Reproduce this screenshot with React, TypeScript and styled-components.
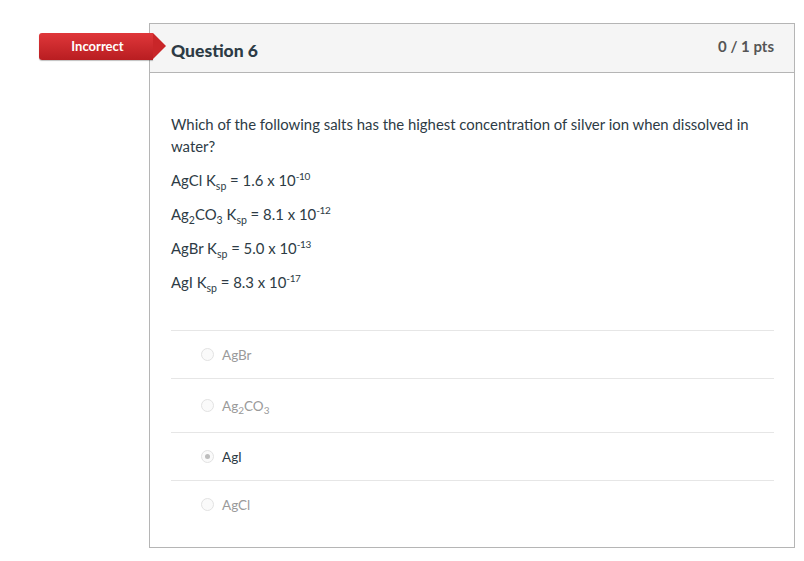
import React from "react";
import styled, { createGlobalStyle } from "styled-components";

const Global = createGlobalStyle`
  html, body { margin: 0; padding: 0; background: #fff; }
  body { font-family: Lato, "Open Sans", Arial, sans-serif; color: #2d3b45; }
`;

const Page = styled.div`
  padding: 23px 0 0 149px;
`;

const Card = styled.div`
  position: relative;
  width: 644px;
  height: 523px;
  border: 1px solid #b5b5b5;
`;

const Badge = styled.div`
  position: absolute;
  left: -111px;
  top: 9px;
  width: 114px;
  height: 27px;
  box-sizing: border-box;
  padding-left: 3px;
  border-radius: 3px 0 0 3px;
  background: linear-gradient(#e0373a, #b81d21);
  color: #fff;
  font-weight: 700;
  font-size: 13px;
  line-height: 27px;
  text-align: center;
  box-shadow: 0 1px 1px rgba(0,0,0,0.25);
  &::after {
    content: "";
    position: absolute;
    right: -13px;
    top: 0;
    border-top: 13.5px solid transparent;
    border-bottom: 13.5px solid transparent;
    border-left: 13px solid #c92629;
  }
`;

const Header = styled.div`
  display: flex;
  align-items: center;
  justify-content: space-between;
  height: 48px;
  padding: 0 20px 0 21px;
  background: #f5f5f5;
  border-bottom: 1px solid #b5b5b5;
`;

const Title = styled.h2`
  margin: 0;
  font-size: 17.5px;
  font-weight: 900;
  color: #2d3b45;
  padding-top: 5px;
`;

const Points = styled.div`
  font-size: 15px;
  font-weight: 700;
  color: #555;
  padding-bottom: 5px;
`;

const Body = styled.div`
  padding: 40px 20px 0 21px;
`;

const Text = styled.div`
  font-size: 14.9px;
  line-height: 22px;
  color: #2d3b45;
  margin-bottom: 12px;
  sub { font-size: 10.5px; line-height: 0; }
  sup { font-size: 10px; line-height: 0; letter-spacing: -0.4px; }
`;

const Answers = styled.div`
  margin-top: 37px;
  border-top: 1px solid #e6e6e6;
`;

const Answer = styled.div<{ $tall?: boolean; $selected?: boolean; $last?: boolean }>`
  display: flex;
  align-items: center;
  gap: 8px;
  height: ${(p) => (p.$tall ? 53 : 47)}px;
  padding-left: 30px;
  border-bottom: 1px solid ${(p) => (p.$last ? "transparent" : "#e6e6e6")};
  font-size: 13.5px;
  color: ${(p) => (p.$selected ? "#2d3b45" : "#9a9a9a")};
`;

const Label = styled.span`
  sub { font-size: 10px; line-height: 0; vertical-align: -3px; }
`;

const Radio = styled.span<{ $checked?: boolean }>`
  position: relative;
  width: 11px;
  height: 11px;
  border-radius: 50%;
  border: 1px solid #e2e2e2;
  background: #fafafa;
  flex: none;
  &::after {
    content: "";
    display: ${(p) => (p.$checked ? "block" : "none")};
    position: absolute;
    left: 3px;
    top: 3px;
    width: 5px;
    height: 5px;
    border-radius: 50%;
    background: #bdbdbd;
  }
`;

export default function App() {
  return (
    <Page>
      <Global />
      <Card>
        <Badge>Incorrect</Badge>
        <Header>
          <Title>Question 6</Title>
          <Points>0 / 1 pts</Points>
        </Header>
        <Body>
          <Text>
            Which of the following salts has the highest concentration of silver ion when dissolved in water?
          </Text>
          <Text>AgCl K<sub>sp</sub> = 1.6 x 10<sup>-10</sup></Text>
          <Text>Ag<sub>2</sub>CO<sub>3</sub> K<sub>sp</sub> = 8.1 x 10<sup>-12</sup></Text>
          <Text>AgBr K<sub>sp</sub> = 5.0 x 10<sup>-13</sup></Text>
          <Text>AgI K<sub>sp</sub> = 8.3 x 10<sup>-17</sup></Text>
          <Answers>
            <Answer><Radio /><Label>AgBr</Label></Answer>
            <Answer $tall><Radio /><Label>Ag<sub>2</sub>CO<sub>3</sub></Label></Answer>
            <Answer $selected><Radio $checked /><Label>AgI</Label></Answer>
            <Answer $last><Radio /><Label>AgCl</Label></Answer>
          </Answers>
        </Body>
      </Card>
    </Page>
  );
}
